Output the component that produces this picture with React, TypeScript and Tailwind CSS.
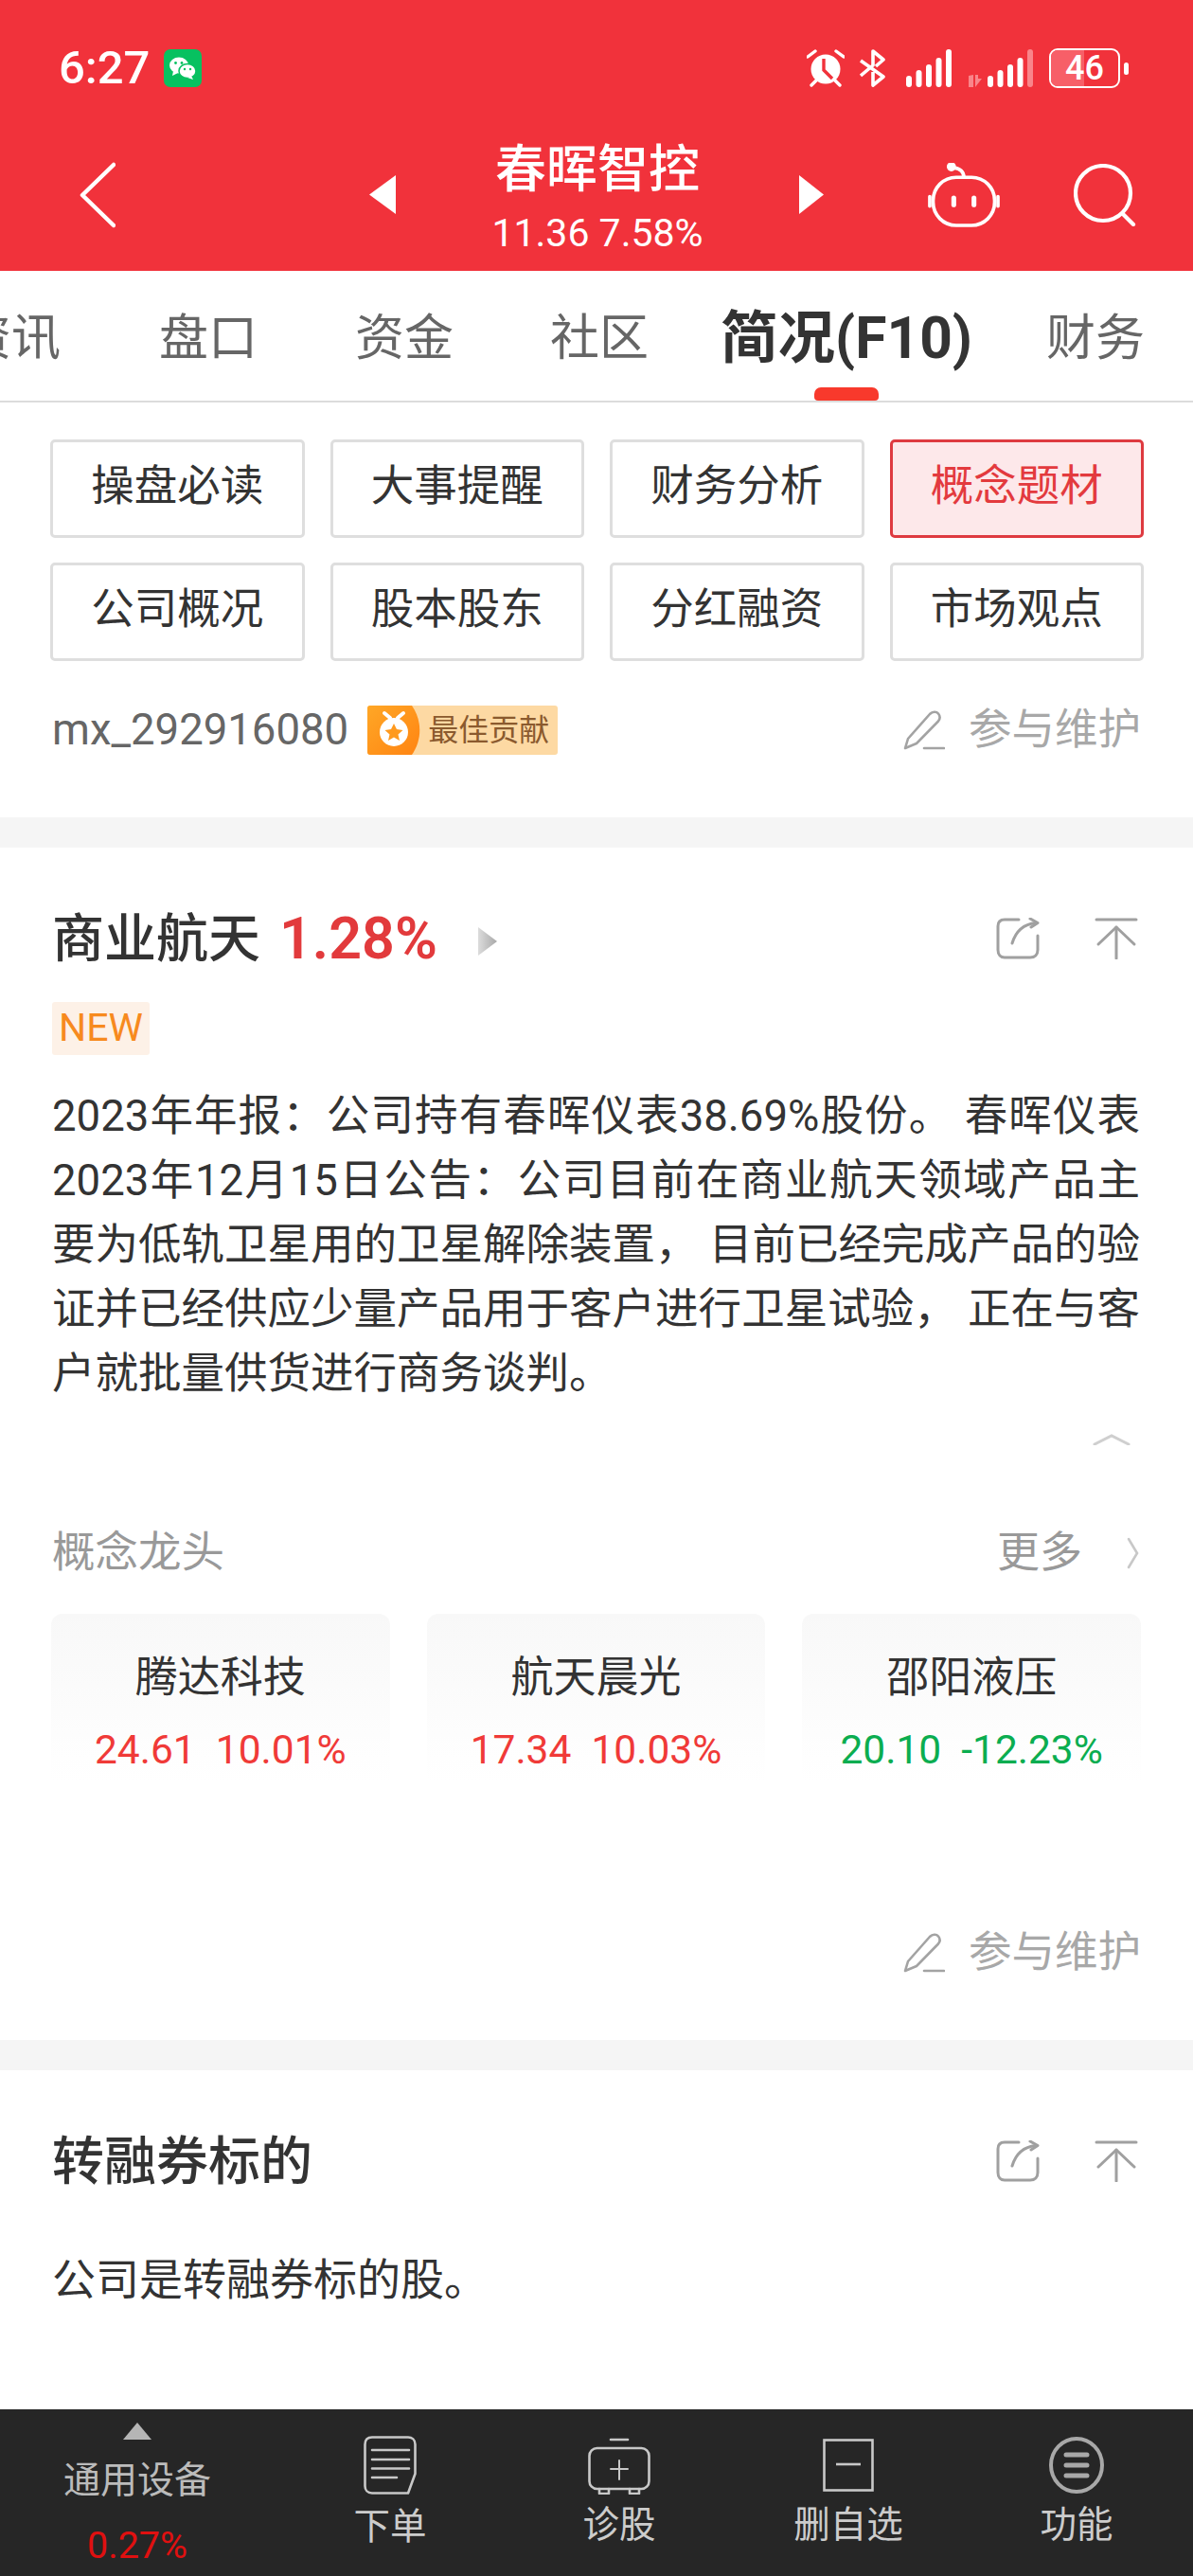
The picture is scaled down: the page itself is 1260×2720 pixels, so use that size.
const font = "[font-family:Roboto,'Noto_Sans_CJK_SC',sans-serif]";

function Pen() {
  return (
    <svg width="44" height="42" viewBox="0 0 44 42" fill="none" stroke="#a3a3a3" strokeWidth="2.6" strokeLinecap="round" strokeLinejoin="round">
      <path d="M2 40 L5 30 L28 4 C31 1 35 1 37 3.5 C39 6 39 9 37 11.5 L14 35 Z" />
      <path d="M22 40 H43" />
    </svg>
  );
}

function EditRow() {
  return (
    <div className="flex items-center justify-end h-[52px] pr-[55px]">
      <Pen />
      <span className="ml-[25px] text-[45.5px] leading-[52px] text-[#a8a8a8]">参与维护</span>
    </div>
  );
}

function CardIcons() {
  return (
    <div className="flex items-center pr-[2px]">
      <svg width="46" height="44" viewBox="0 0 46 44" fill="none" stroke="#a0a0a0" strokeWidth="3" strokeLinecap="round" strokeLinejoin="round">
        <path d="M24 2 H9 C4 2 2 5 2 9 V34 C2 39 5 42 9 42 H36 C41 42 44 39 44 34 V19" />
        <path d="M17 27 C20 17 27 7 42 5.5" />
        <path d="M36 1 L44 5.5 L37 10" />
      </svg>
      <svg className="ml-[58px]" width="46" height="44" viewBox="0 0 46 44" fill="none" stroke="#a0a0a0" strokeWidth="3" strokeLinecap="round" strokeLinejoin="round">
        <path d="M2 2 H44" />
        <path d="M23 43 V10" />
        <path d="M4 28 L23 10 L42 28" />
      </svg>
    </div>
  );
}

const btns = ["操盘必读", "大事提醒", "财务分析", "概念题材", "公司概况", "股本股东", "分红融资", "市场观点"];

const stocks = [
  { n: "腾达科技", v: "24.61", p: "10.01%", c: "text-[#f03a38]" },
  { n: "航天晨光", v: "17.34", p: "10.03%", c: "text-[#f03a38]" },
  { n: "邵阳液压", v: "20.10", p: "-12.23%", c: "text-[#0bad50]" },
];

const paragraph = [
  "2023年年报：公司持有春晖仪表38.69%股份。 春晖仪表",
  "2023年12月15日公告：公司目前在商业航天领域产品主",
  "要为低轨卫星用的卫星解除装置， 目前已经完成产品的验",
  "证并已经供应少量产品用于客户进行卫星试验， 正在与客",
];

function StatusIcons() {
  return (
    <div className="flex items-center">
      <svg width="40" height="40" viewBox="0 0 40 40" fill="white">
        <circle cx="20" cy="21" r="15.5" />
        <path d="M1 8 L9 2 M39 8 L31 2 M5 38 L10 33 M35 38 L30 33" stroke="white" strokeWidth="3.4" strokeLinecap="round" />
        <path d="M18 10 V22 L27 31" stroke="#f1323b" strokeWidth="3.4" fill="none" />
      </svg>
      <svg className="ml-[16px]" width="28" height="40" viewBox="0 0 28 40" fill="none" stroke="white" strokeWidth="3.6" strokeLinejoin="round">
        <path d="M1 12 L25 29 L14 38 V24 M1 28 L14 17 V2 L25 11 L17 18" />
      </svg>
      <svg className="ml-[21px]" width="49" height="40" viewBox="0 0 49 40" fill="white">
        <rect x="0" y="28" width="6" height="12" rx="3" />
        <rect x="10.5" y="22" width="6" height="18" rx="3" />
        <rect x="21" y="16" width="6" height="24" rx="3" />
        <rect x="31.5" y="9" width="6" height="31" rx="3" />
        <rect x="42" y="0" width="6" height="40" rx="3" />
      </svg>
      <svg className="ml-[16px]" width="70" height="40" viewBox="0 0 70 40" fill="white">
        <path d="M1 40 V28 L6 27 V40 Z M8 27 V40 L15 31 H11 V27 Z" fill="#f9858a" />
        <rect x="21" y="28" width="6" height="12" rx="3" />
        <rect x="31.5" y="22" width="6" height="18" rx="3" />
        <rect x="42" y="16" width="6" height="24" rx="3" />
        <rect x="52.5" y="9" width="6" height="31" rx="3" />
        <rect x="63" y="0" width="6" height="40" rx="3" fill="#f9858a" />
      </svg>
      <div className="relative ml-[16px] flex h-[42px] w-[75px] items-center justify-center overflow-hidden rounded-[9px] border-[2.5px] border-white">
        <span className="absolute bottom-0 left-0 top-0 w-[35px] bg-[#f75f68]" />
        <span className="relative text-[36px] font-medium leading-[36px] text-white">46</span>
      </div>
      <span className="ml-[4px] h-[13px] w-[5px] rounded-full bg-white" />
    </div>
  );
}

export default function App() {
  return (
    <div lang="zh-CN" className={`${font} flex h-[2720px] w-[1260px] flex-col overflow-hidden bg-white`}>
      <header className="h-[286px] shrink-0 bg-[#f1323b] pt-[51px] text-white">
        <div className="flex h-[42px] items-center justify-between pl-[62px] pr-[68px]">
          <div className="flex items-center">
            <span className="text-[49px] font-medium leading-[42px]">6:27</span>
            <div className="ml-[15px] flex h-[40px] w-[40px] items-center justify-center rounded-[7px] bg-[#07c160]">
              <svg width="30" height="26" viewBox="0 0 30 26" fill="white">
                <ellipse cx="11" cy="10" rx="10" ry="8.5" />
                <path d="M5 16 L4 21 L10 18 Z" />
                <ellipse cx="20" cy="16" rx="9" ry="7.5" stroke="#07c160" strokeWidth="1.5" />
                <path d="M24 21 L26 25 L20 23 Z" />
                <circle cx="7.5" cy="7.5" r="1.4" fill="#07c160" />
                <circle cx="14" cy="7.5" r="1.4" fill="#07c160" />
                <circle cx="17" cy="14" r="1.2" fill="#07c160" />
                <circle cx="23" cy="14" r="1.2" fill="#07c160" />
              </svg>
            </div>
          </div>
          <StatusIcons />
        </div>
        <div className="mt-[50px] flex items-center pl-[84px]">
          <svg width="38" height="70" viewBox="0 0 38 70" fill="none" stroke="white" strokeWidth="4.5" strokeLinecap="round" strokeLinejoin="round">
            <path d="M36 3 L3 35 L36 67" />
          </svg>
          <svg className="ml-[268px]" width="28" height="41" viewBox="0 0 28 41" fill="white"><path d="M28 0 V41 L0 20.5 Z" /></svg>
          <div className="w-[426px] pt-[5px] text-center">
            <div className="text-[54px] font-medium leading-[64px]">春晖智控</div>
            <div className="mt-[12px] text-[41px] leading-[44px]">11.36 7.58%</div>
          </div>
          <svg width="26" height="41" viewBox="0 0 26 41" fill="white"><path d="M0 0 V41 L26 20.5 Z" /></svg>
          <svg className="ml-[110px]" width="76" height="68" viewBox="0 0 74 67" fill="none" stroke="white" strokeWidth="3.6" strokeLinecap="round">
            <circle cx="24" cy="4" r="3" fill="white" />
            <path d="M27 5 C33 6 37 9 37 15" />
            <rect x="5" y="15" width="64" height="50" rx="24" />
            <path d="M1.5 35 V45 M72.5 35 V45" />
            <rect x="24" y="34" width="5" height="12" rx="2.5" fill="white" stroke="none" />
            <rect x="45" y="34" width="5" height="12" rx="2.5" fill="white" stroke="none" />
          </svg>
          <svg className="ml-[78px]" width="66" height="66" viewBox="0 0 66 66" fill="none" stroke="white" strokeWidth="4.2" strokeLinecap="round">
            <circle cx="31" cy="31" r="29" />
            <path d="M52 53 L63 64" />
          </svg>
        </div>
      </header>

      <nav className="relative flex h-[139px] shrink-0 items-center overflow-hidden border-b-2 border-[#dcdcdc] pt-[6px] text-[52px] leading-[60px] text-[#666]">
        <span className="-ml-[40px] shrink-0">资讯</span>
        <span className="ml-[104px] shrink-0">盘口</span>
        <span className="ml-[103px] shrink-0">资金</span>
        <span className="ml-[102px] shrink-0">社区</span>
        <span className="relative ml-[76px] shrink-0 text-[60.5px] font-bold text-[#333]">
          简况(F10)
        </span>
        <span className="ml-[78px] shrink-0">财务</span>
        <span className="absolute bottom-0 left-[860px] h-[14px] w-[68px] rounded-t-[7px] rounded-b-[4px] bg-[#f8392c]" />
      </nav>

      <div className="mt-[39px] grid grid-cols-4 gap-x-[27px] gap-y-[26px] pl-[53px] pr-[52px]">
        {btns.map((b) => {
          const active = b === "概念题材";
          return (
            <div
              key={b}
              className={`flex h-[104px] items-center justify-center rounded-[5px] border-[3px] pb-[3px] text-[45.5px] ${
                active ? "border-[#de3a40] bg-[#fde8ea] text-[#e33a3e]" : "border-[#dedede] bg-white text-[#333]"
              }`}
            >
              {b}
            </div>
          );
        })}
      </div>

      <div className="mt-[47px] flex h-[52px] items-center justify-between pl-[55px]">
        <div className="flex items-center">
          <span className="text-[45.5px] leading-[52px] text-[#666]">mx_292916080</span>
          <div className="relative ml-[20px] flex h-[52px] w-[201px] items-center overflow-hidden rounded-[3px] bg-[#fdd9a3]">
            <svg className="absolute left-0 top-0" width="56" height="52" viewBox="0 0 56 52">
              <defs>
                <linearGradient id="medal" x1="0" y1="0" x2="1" y2="1">
                  <stop offset="0" stopColor="#ffa726" />
                  <stop offset="1" stopColor="#ff8412" />
                </linearGradient>
              </defs>
              <path d="M0 0 H47 C58 16 58 36 47 52 H0 Z" fill="url(#medal)" />
              <circle cx="28" cy="28" r="15" fill="white" />
              <path d="M18 8 L24 13 M38 8 L32 13" stroke="white" strokeWidth="4" strokeLinecap="round" />
              <path d="M28 19 L31 25 L37.5 26 L32.5 30.5 L34 37 L28 33.5 L22 37 L23.5 30.5 L18.5 26 L25 25 Z" fill="#ff9a1e" />
            </svg>
            <span className="ml-[64px] text-[32px] leading-[40px] text-[#8b5a2e]">最佳贡献</span>
          </div>
        </div>
        <EditRow />
      </div>

      <div className="mt-[66px] h-[32px] shrink-0 bg-[#f5f5f5]" />

      <section className="pl-[55px] pr-[56px] pt-[66px]">
        <div className="flex h-[60px] items-center justify-between">
          <div className="flex items-center">
            <span className="text-[55px] font-medium leading-[60px] text-[#333]">商业航天</span>
            <span className="ml-[20px] text-[61px] font-semibold leading-[60px] text-[#e23a3c]">1.28%</span>
            <svg className="ml-[43px] mt-[6px]" width="20" height="30" viewBox="0 0 20 30">
              <defs>
                <linearGradient id="tri" x1="0" y1="0" x2="1" y2="0">
                  <stop offset="0" stopColor="#dcdcdc" />
                  <stop offset="1" stopColor="#a8a8a8" />
                </linearGradient>
              </defs>
              <path d="M0 0 L20 15 L0 30 Z" fill="url(#tri)" />
            </svg>
          </div>
          <CardIcons />
        </div>
        <div className="mt-[37px] flex h-[56px] w-[103px] items-center justify-center rounded-[3px] bg-[#fdf1e7] text-[41px] text-[#f78a1e]">
          NEW
        </div>
        <div className="mt-[31px] text-[45.5px] leading-[68px] text-[#333]">
          {paragraph.map((l) => (
            <div key={l} className="text-justify [text-align-last:justify]">{l}</div>
          ))}
          <div>户就批量供货进行商务谈判。</div>
        </div>
      </section>

      <div className="mt-[29px] flex justify-end pr-[66px]">
        <svg width="40" height="12" viewBox="0 0 40 12" fill="none" stroke="#cfcfcf" strokeWidth="3" strokeLinecap="round">
          <path d="M2 11 L20 2 L38 11" />
        </svg>
      </div>

      <div className="mt-[84px] flex h-[60px] items-center justify-between pl-[55px] pr-[57px] text-[#999]">
        <span className="text-[45.5px] leading-[60px]">概念龙头</span>
        <div className="flex items-center">
          <span className="text-[45px] leading-[60px]">更多</span>
          <svg className="ml-[47px]" width="13" height="34" viewBox="0 0 13 34" fill="none" stroke="#c8c8c8" strokeWidth="2.6" strokeLinecap="round">
            <path d="M2 2 L11 17 L2 32" />
          </svg>
        </div>
      </div>

      <div className="mt-[34px] grid grid-cols-3 gap-x-[39px] pl-[54px] pr-[55px]">
        {stocks.map((s) => (
          <div key={s.n} className="flex h-[178px] flex-col items-center rounded-t-[12px] bg-gradient-to-b from-[#f8f8f8] to-white pt-[41px]">
            <div className="text-[45px] leading-[54px] text-[#333]">{s.n}</div>
            <div className={`mt-[24px] whitespace-pre text-[42.5px] leading-[50px] ${s.c}`}>{s.v}  {s.p}</div>
          </div>
        ))}
      </div>

      <div className="mt-[154px]">
        <EditRow />
      </div>

      <div className="mt-[66px] h-[32px] shrink-0 bg-[#f5f5f5]" />

      <section className="pl-[55px] pr-[56px] pt-[66px]">
        <div className="flex h-[60px] items-center justify-between">
          <span className="text-[55px] font-medium leading-[60px] text-[#333]">转融券标的</span>
          <CardIcons />
        </div>
        <div className="mt-[61px] text-[46px] leading-[68px] text-[#333]">公司是转融券标的股。</div>
      </section>

      <div className="flex-1" />

      <footer className="flex h-[176px] shrink-0 bg-[#262626] text-[38.5px] text-[#cccccc]">
        <div className="flex w-[290px] flex-col items-center pt-[14px]">
          <svg width="30" height="18" viewBox="0 0 30 18" fill="#b5b5b5"><path d="M15 0 L30 18 H0 Z" /></svg>
          <div className="mt-[20px] text-[39px] leading-[46px] text-[#bbbbbb]">通用设备</div>
          <div className="mt-[24px] text-[39.5px] leading-[44px] text-[#e01010]">0.27%</div>
        </div>
        <div className="flex w-[244px] flex-col items-center pt-[28px]">
          <svg width="56" height="62" viewBox="0 0 56 62" fill="none" stroke="#c8c8c8" strokeWidth="2.6" strokeLinecap="round" strokeLinejoin="round">
            <path d="M9 1.5 H47 C51 1.5 54.5 4 54.5 9 V40 L47 60.5 H9 C4 60.5 1.5 57 1.5 53 V9 C1.5 4 4 1.5 9 1.5 Z" />
            <path d="M9 15 H48 M9 25 H48 M9 34.5 H48 M9 44 H35" />
          </svg>
          <div className="mt-[11px] leading-[46px]">下单</div>
        </div>
        <div className="flex w-[240px] flex-col items-center pt-[30px]">
          <svg width="66" height="60" viewBox="0 0 66 60" fill="none" stroke="#c8c8c8" strokeWidth="2.6" strokeLinecap="round" strokeLinejoin="round">
            <path d="M24 2 H42" />
            <rect x="1.5" y="11" width="63" height="43" rx="8" />
            <path d="M33 24 V44 M24 33 H42" strokeWidth="2" />
            <path d="M12 54 V59 H22 V54 M44 54 V59 H54 V54" />
          </svg>
          <div className="mt-[9px] leading-[46px]">诊股</div>
        </div>
        <div className="flex w-[244px] flex-col items-center pt-[31px]">
          <svg width="54" height="56" viewBox="0 0 54 56" fill="none" stroke="#c8c8c8" strokeWidth="2.6">
            <rect x="1.5" y="1.5" width="51" height="53" />
            <path d="M14 27 H40" />
          </svg>
          <div className="mt-[12px] leading-[46px]">删自选</div>
        </div>
        <div className="flex w-[238px] flex-col items-center pt-[29px]">
          <svg width="58" height="60" viewBox="0 0 58 60" fill="none" stroke="#a8a8a8" strokeWidth="4">
            <ellipse cx="29" cy="30" rx="27" ry="28" />
            <path d="M18 19 H40 M18 30 H40 M18 41 H40" stroke="#a8a8a8" strokeWidth="5" strokeLinecap="round" />
          </svg>
          <div className="mt-[10px] leading-[46px]">功能</div>
        </div>
      </footer>
    </div>
  );
}
